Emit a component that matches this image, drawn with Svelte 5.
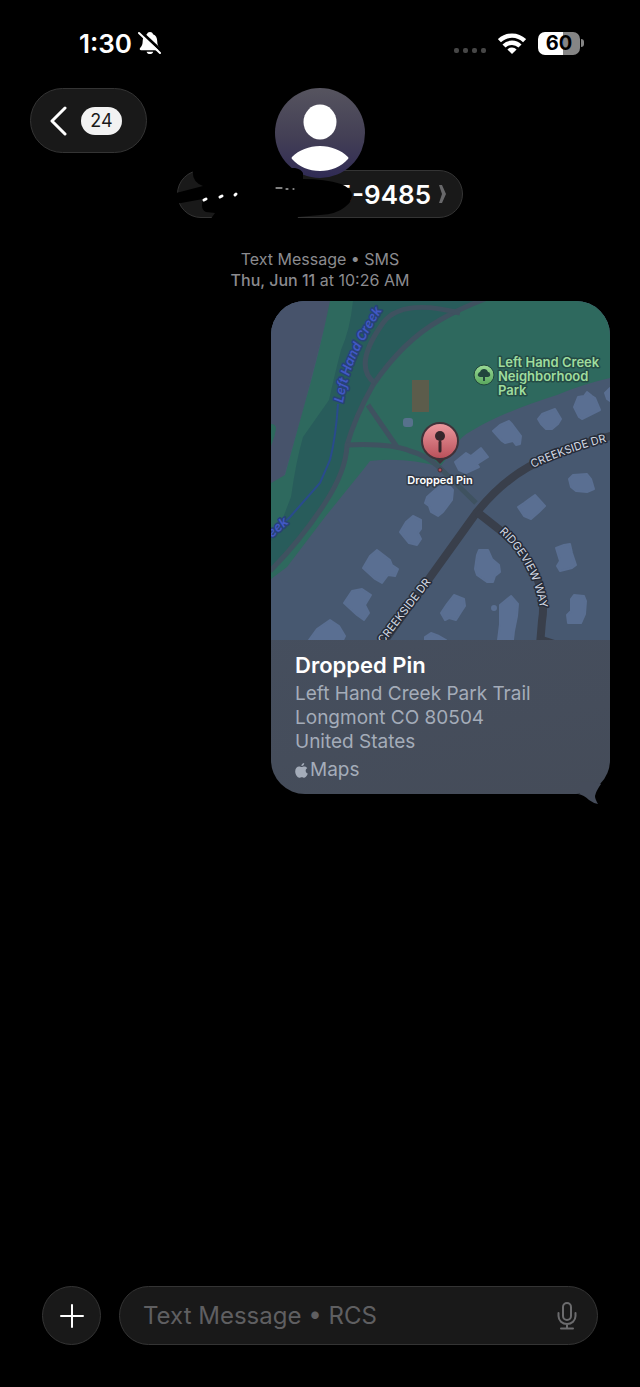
<script>
    let draft = $state('');
    const unread = 24;
    const battery = 60;
    const address = ['Left Hand Creek Park Trail', 'Longmont CO 80504', 'United States'];

    // footprints of the houses along the street
    const houses = [
        '184,161 195,152 200,155 210,147 217,156 206,163 208,166 195,172 188,169',
        '222,130 229,124 238,120 241,123 250,135 249,143 245,144 242,140 234,142 231,140',
        '267,118 271,113 284,108 290,118 287,123 281,128 275,128 270,123',
        '303,106 307,96 313,95 316,91 321,95 324,97 329,109 323,112 311,118 308,116',
        '334,92 339,87 339,100 336,98',
        '156,196 165,188 175,181 182,189 181,199 172,211 167,215 160,211 158,205 154,202',
        '129,231 135,221 142,215 150,219 150,228 147,232 150,238 146,244 138,242',
        '92,267 99,255 106,249 119,259 121,264 127,268 124,275 117,274 111,282 104,278',
        '73,302 81,290 91,288 100,294 94,304 98,312 93,319 86,314',
        '38,339 46,328 59,319 68,325 74,335 72,339',
        '247,206 253,202 257,199 264,194 274,205 268,211 260,218 253,215',
        '298,178 302,174 316,173 320,178 323,188 316,191 305,190 300,186',
        '206,254 208,249 217,249 221,258 228,264 229,271 224,275 222,281 216,281 206,274 204,268',
        '285,247 293,244 299,243 301,252 305,264 301,267 289,270 286,265 289,260',
        '170,312 176,303 183,294 193,298 194,305 190,311 185,319 178,317 174,319',
        '229,304 240,295 247,303 246,315 243,330 242,339 227,339 229,323',
        '300,298 303,294 313,295 315,300 314,313 310,322 297,322 296,314 300,310',
        '154,336 160,332 168,335 175,339 154,339',
    ];
</script>

<div class="phone">
    <div class="status">
        <div class="clock">
            <time>1:30</time>
            <svg width="23" height="24" viewBox="0 0 23 24" aria-hidden="true">
                <path d="M12 1c-1.500 0-2.700.9-3 2.200C6 4.300 4.800 6.800 4.700 10c-.1 3.500-.7 5-2.600 7-.8.900-.3 2.200 1 2.200h17.600c1.300 0 1.800-1.300 1-2.200-1.900-2-2.400-3.500-2.500-7-.1-3.200-1.300-5.700-4.200-6.800C14.700 1.900 13.500 1 12 1zM8.600 20.700c.3 1.400 1.700 2.300 3.300 2.300s3-.9 3.300-2.300z" fill="#fff" />
                <path d="M2 0l22 20.500" stroke="#000" stroke-width="3" />
                <path d="M1 2l21 20" stroke="#fff" stroke-width="2" stroke-linecap="round" />
            </svg>
        </div>
        <div class="signals">
            <div class="bars"><i></i><i></i><i></i><i></i></div>
            <svg width="28" height="21" viewBox="0 0 28 21" aria-hidden="true">
                <g fill="none" stroke="#fff" stroke-width="4.400">
                    <path d="M1.400 7.800a18 18 0 0 1 25.200 0" />
                    <path d="M6 13a11.400 11.400 0 0 1 16 0" />
                </g>
                <path d="M14 21l-4.600-4.600a6.500 6.500 0 0 1 9.200 0z" fill="#fff" />
            </svg>
            <div class="battery">
                <span class="level" style="--level: {battery}%">{battery}</span>
                <i></i>
            </div>
        </div>
    </div>

    <header>
        <button class="back glass" aria-label="Back, {unread} unread">
            <svg width="18" height="30" viewBox="0 0 18 30" aria-hidden="true">
                <path d="M16 2L3 15l13 13" fill="none" stroke="#fff" stroke-width="3" stroke-linecap="round" stroke-linejoin="round" />
            </svg>
            <span class="unread">{unread}</span>
        </button>

        <div class="contact">
            <svg class="avatar" viewBox="0 0 90 90" aria-hidden="true">
                <defs>
                    <linearGradient id="avatar-fill" x2="0" y2="1">
                        <stop offset="0" stop-color="#56545f" />
                        <stop offset=".55" stop-color="#433f55" />
                        <stop offset="1" stop-color="#302b55" />
                    </linearGradient>
                </defs>
                <circle cx="45" cy="45" r="45" fill="url(#avatar-fill)" />
                <ellipse cx="45" cy="34" rx="16.500" ry="17.500" fill="#fff" />
                <path d="M17 69c7-7 17-11 28-11s21 4 28 11q1 1 0 2c-7 8-17 12-28 12s-21-4-28-12q-1-1 0-2z" fill="#fff" />
            </svg>
            <button class="name glass">
                <span>5-9485</span>
                <svg width="8" height="20" viewBox="0 0 8 20" aria-hidden="true">
                    <path d="M0 1h3l4 9-4 9H0l3-9z" fill="#68686a" />
                </svg>
            </button>
            <!-- marker strokes hiding the number -->
            <svg class="scribble" viewBox="0 0 285 54" aria-hidden="true">
                <path d="M16 2Q14 16 26 20L-1 27V38L26 33Q23 44 29 46L38 47 33 54H120L121 51 143 49Q160 48 168 41 175 36 175 29 174 22 164 18 148 13 126 13V7Q124 3 118 2z" />
                <g stroke="#fff" stroke-width="3" stroke-linecap="round">
                    <path d="M27 34l2-1M43 31l2-1M58 29l1-1" />
                    <path d="M99 22h6M109 23h2M116 23h1" stroke-width="1" />
                </g>
            </svg>
        </div>
    </header>

    <main>
        <p class="stamp">Text Message • SMS<br /><b>Thu, Jun 11</b> at 10:26 AM</p>

        <a class="bubble" href="#map">
            <svg class="map" viewBox="0 0 339 339" role="img" aria-label="Map of Left Hand Creek Park Trail">
                <defs>
                    <linearGradient id="pin-fill" x2="0" y2="1">
                        <stop offset="0" stop-color="#ec9a9f" />
                        <stop offset="1" stop-color="#b94f59" />
                    </linearGradient>
                    <linearGradient id="park-fill" x2="0" y2="1">
                        <stop offset="0" stop-color="#9bdb96" />
                        <stop offset="1" stop-color="#58a65c" />
                    </linearGradient>
                    <path id="creek-upper" d="M72 102C76 77 83 57 97 33Q104 20 115 3" />
                    <path id="creek-lower" d="M-25 260L18 222" />
                    <path id="creekside-east" d="M262 167Q295 151 345 138" />
                    <path id="creekside-west" d="M105 353L160 281" />
                    <path id="ridgeview" d="M228 231Q263 263 270 312" />
                </defs>

                <rect width="339" height="339" fill="#475870" />
                <path d="M0 0H60L32 109 13 175 0 184z" fill="#47536b" />
                <path d="M59 0H339V77Q312 83 286 94 232 111 202 129 188 136 184 147L169 166Q135 156 99 160L92 169 54 216 16 266 0 278V182L14 174 32 109Q49 50 59 0z" fill="#2e695e" />
                <path d="M0 123q5 0 5 5-1 8-5 17z" fill="#2e695e" />
                <path d="M82 0H212Q162 22 132 46 116 62 102 82L76 142Q76 160 69 178L54 202 26 239 0 267V235L12 217Q16 206 20 196 25 160 32 136L58 99Q64 72 70 49 79 29 82 0z" fill="#285c5b" />
                <path d="M67 103Q65 135 59 159L49 182 19 216 0 233" fill="none" stroke="#294b8d" stroke-width="2" />

                <g fill="none" stroke="#3f5260" stroke-width="5">
                    <path d="M214-2Q188 8 169 19 132 40 102 84 84 116 76 144 75 170 54 202 30 239-1 270" />
                    <path d="M189 12Q130-3 112 22 81 65 104 82M97 104L126 146M76 144Q119 142 139 150 155 154 169 167L205 202" />
                </g>
                <g fill="none" stroke="#393f4b" stroke-width="8">
                    <path d="M344 134Q303 144 279 156 238 171 206 211L109 346" />
                    <path d="M206 211L229 229Q279 272 271 320L269 344" />
                    <path d="M269 337l16 5" stroke-width="5" />
                </g>

                <g fill="#5a6f92" stroke="#5a6f92" stroke-width="2" stroke-linejoin="round">
                    {#each houses as points}
                        <polygon {points} />
                    {/each}
                    <circle cx="223" cy="307" r="2" />
                </g>
                <rect x="141" y="79" width="17" height="32" fill="#5c5c4b" />
                <rect x="132" y="117" width="10" height="9" rx="3" fill="#57718c" />

                <g class="creek">
                    <text><textPath href="#creek-upper">Left Hand Creek</textPath></text>
                    <text><textPath href="#creek-lower" startOffset="100%" text-anchor="end">Creek</textPath></text>
                </g>
                <g class="street">
                    <text><textPath href="#creekside-east">CREEKSIDE DR</textPath></text>
                    <text><textPath href="#creekside-west" startOffset="100%" text-anchor="end">CREEKSIDE DR</textPath></text>
                    <text><textPath href="#ridgeview">RIDGEVIEW WAY</textPath></text>
                </g>

                <circle cx="213" cy="74" r="10" fill="url(#park-fill)" stroke="#21453d" stroke-width="1" />
                <path d="M212 80v-4h-3q-3-1-2-3 1-2 2-2 1-3 4-3t4 3q2 0 2 2 1 2-2 3h-3v4z" fill="#21453d" />
                <text class="park" x="227" y="66">Left Hand Creek</text>
                <text class="park" x="227" y="80">Neighborhood</text>
                <text class="park" x="227" y="94">Park</text>

                <path d="M163 157l6 6 6-6z" fill="#3f3239" />
                <circle cx="169" cy="140" r="18" fill="url(#pin-fill)" stroke="#3f3239" stroke-width="2" />
                <circle cx="169" cy="135" r="5" fill="#36262b" />
                <path d="M169 141v9" stroke="#36262b" stroke-width="3" stroke-linecap="round" />
                <circle cx="169" cy="169" r="2" fill="#b04e5a" stroke="#3f3239" />
                <text class="pin" x="169" y="183" text-anchor="middle">Dropped Pin</text>
            </svg>

            <div class="caption">
                <strong>Dropped Pin</strong>
                <address>
                    {#each address as line}
                        <span>{line}</span>
                    {/each}
                </address>
                <span class="source">
                    <svg width="13" height="15" viewBox="0 0 13 15" aria-hidden="true">
                        <path d="M9.200 0c.1 1.600-1.200 3.100-2.800 3.100C6.200 1.600 7.600.2 9.200 0zM6.600 4.100c.6 0 1.500-.7 2.700-.7 1.200 0 2.300.6 3 1.600-2.400 1.500-2 4.600.5 5.600-.6 1.800-2.100 4.200-3.500 4.200-1 0-1.400-.6-2.500-.6s-1.500.6-2.500.6C2.500 14.800.2 11.600.2 8.300c0-3.200 2-4.800 3.800-4.800 1.200 0 2 .6 2.600.6z" fill="#a4acb9" />
                    </svg>Maps
                </span>
            </div>
            <svg class="tail" width="34" height="22" viewBox="0 0 34 22" aria-hidden="true">
                <path d="M2 12Q8 13 13 18 17 21 22 22 19 17 19 14 20 9 25 2L18 0H4V12z" fill="#454c5a" />
            </svg>
        </a>
    </main>

    <footer>
        <button class="add glass" aria-label="Add attachment">
            <svg width="24" height="24" viewBox="0 0 24 24" aria-hidden="true">
                <path d="M12 1v22M1 12h22" stroke="#fff" stroke-width="2" stroke-linecap="round" />
            </svg>
        </button>
        <div class="compose glass">
            <input type="text" aria-label="Message" placeholder="Text Message • RCS" bind:value={draft} />
            <button class="mic" aria-label="Dictate">
                <svg width="20" height="28" viewBox="0 0 20 28" aria-hidden="true">
                    <g fill="none" stroke="#6b6b6d" stroke-width="2" stroke-linecap="round">
                        <rect x="6" y="1" width="8" height="17" rx="4" />
                        <path d="M1.500 11v3a8.500 8 0 0 0 17 0v-3M10 22v4M4 26.500h12" />
                    </g>
                </svg>
            </button>
        </div>
    </footer>
</div>

<style>
    :global(body) {
        background: #000;
    }

    .phone {
        display: flex;
        flex-direction: column;
        box-sizing: border-box;
        min-height: 100vh;
        background: #000;
        color: #fff;
        font-family: Inter, "Liberation Sans", sans-serif;
    }

    button {
        padding: 0;
        border: 0;
        background: none;
        color: inherit;
        font: inherit;
    }

    svg {
        display: block;
        flex: none;
    }

    .glass {
        box-sizing: border-box;
        border: 1px solid #343434;
        background: #191919;
    }

    .status {
        display: flex;
        justify-content: space-between;
        align-items: center;
        height: 86px;
        padding: 0 56px 0 79px;
    }

    .clock, .signals {
        display: flex;
        align-items: center;
    }

    .clock {
        gap: 6px;
        font-size: 26px;
        font-weight: 600;
    }

    .signals {
        gap: 12px;
    }

    .bars {
        display: flex;
        gap: 4px;
        padding-top: 14px;
    }

    .bars i {
        width: 5px;
        height: 5px;
        border-radius: 2px;
        background: #464646;
    }

    .battery {
        display: flex;
        align-items: center;
        gap: 1px;
    }

    .level {
        width: 42px;
        border-radius: 7px;
        background: linear-gradient(90deg, #fff var(--level), #858585 var(--level));
        color: #000;
        font-size: 20px;
        font-weight: 700;
        line-height: 23px;
        text-align: center;
    }

    .battery i {
        width: 3px;
        height: 8px;
        border-radius: 0 3px 3px 0;
        background: #858585;
    }

    header {
        display: grid;
        grid-template-columns: 1fr auto 1fr;
        align-items: start;
        padding: 2px 30px 0;
    }

    .back {
        display: flex;
        align-items: center;
        gap: 14px;
        width: 117px;
        height: 65px;
        padding-left: 18px;
        border-radius: 33px;
    }

    .unread {
        width: 41px;
        border-radius: 14px;
        background: #f2f2f2;
        color: #191919;
        font-size: 18px;
        line-height: 28px;
        text-align: center;
    }

    .contact {
        position: relative;
        display: flex;
        flex-direction: column;
        align-items: center;
    }

    .avatar {
        position: relative;
        width: 90px;
        height: 90px;
    }

    .name {
        display: flex;
        justify-content: flex-end;
        align-items: center;
        gap: 8px;
        width: 286px;
        height: 48px;
        margin-top: -8px;
        padding-right: 15px;
        border-radius: 24px;
        font-size: 26px;
        font-weight: 600;
    }

    .scribble {
        position: absolute;
        bottom: -2px;
        left: 0;
        width: 285px;
        height: 54px;
    }

    main {
        flex: 1;
        display: flex;
        flex-direction: column;
        padding: 31px 30px;
    }

    .stamp {
        margin: 0 0 10px;
        color: #8b8b8f;
        font-size: 16px;
        line-height: 21px;
        text-align: center;
    }

    .stamp b {
        font-weight: 500;
    }

    .bubble {
        position: relative;
        align-self: flex-end;
        width: 339px;
        max-width: 100%;
        border-radius: 34px;
        background: linear-gradient(170deg, #465265, #454c59);
        color: #a4acb9;
        text-decoration: none;
    }

    .map {
        width: 100%;
        border-radius: 34px 34px 0 0;
        font-weight: 600;
    }

    .map text {
        paint-order: stroke;
        stroke-width: 3px;
        stroke-linejoin: round;
    }

    .creek {
        fill: #4258c4;
        stroke: #264277;
        font-size: 13px;
        font-style: italic;
    }

    .street {
        fill: #d5dbe5;
        stroke: #262c38;
        font-size: 11px;
        font-weight: 400;
    }

    .park {
        fill: #9fdc9d;
        stroke: #244b45;
        font-size: 13px;
    }

    .pin {
        fill: #fff;
        stroke: #303846;
        font-size: 11px;
    }

    .caption {
        display: flex;
        flex-direction: column;
        gap: 4px;
        padding: 12px 24px;
        font-size: 19px;
        line-height: 24px;
    }

    .caption strong {
        color: #fff;
        font-size: 22px;
        font-weight: 600;
        line-height: 26px;
    }

    address {
        display: flex;
        flex-direction: column;
        font-style: normal;
    }

    .source {
        display: flex;
        align-items: center;
        gap: 2px;
    }

    .tail {
        position: absolute;
        right: 0;
        bottom: -10px;
    }

    footer {
        display: flex;
        gap: 18px;
        padding: 0 42px 42px;
    }

    .add {
        display: flex;
        justify-content: center;
        align-items: center;
        width: 59px;
        height: 59px;
        border-radius: 50%;
    }

    .compose {
        flex: 1;
        display: flex;
        align-items: center;
        height: 59px;
        padding: 0 20px 0 23px;
        border-radius: 30px;
    }

    input {
        flex: 1;
        min-width: 0;
        padding: 0;
        border: 0;
        outline: 0;
        background: none;
        color: #fff;
        font: inherit;
        font-size: 24px;
    }

    input::placeholder {
        color: #5f5f61;
        opacity: 1;
    }
</style>
